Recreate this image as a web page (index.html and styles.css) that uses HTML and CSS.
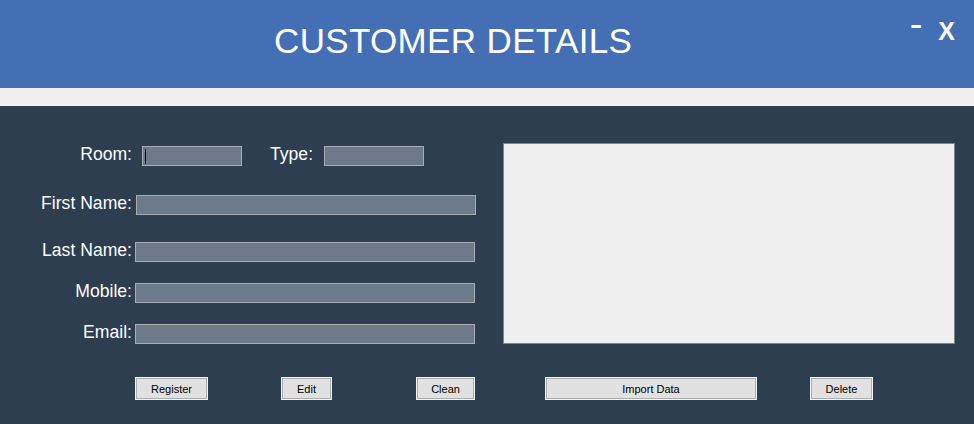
FILE: index.html
```html
<!DOCTYPE html>
<html lang="en">
<head>
<meta charset="utf-8">
<title>Customer Details</title>
<link rel="stylesheet" href="styles.css">
</head>
<body>
<header class="titlebar">
  <h1 class="title">CUSTOMER DETAILS</h1>
  <div class="controls">
    <span class="ctl ctl-min">-</span><span class="ctl ctl-close">X</span>
  </div>
</header>
<div class="band"></div>
<main class="content">
  <div class="top">
    <div class="fields">
      <div class="row row-room">
        <span class="label">Room:</span>
        <div class="field field-small field-room"><span class="caret"></span></div>
        <span class="label-inline">Type:</span>
        <div class="field field-small field-type"></div>
      </div>
      <div class="row row-first">
        <span class="label">First Name:</span>
        <div class="field field-wide field-first"></div>
      </div>
      <div class="row row-last">
        <span class="label">Last Name:</span>
        <div class="field field-wide"></div>
      </div>
      <div class="row row-mobile">
        <span class="label">Mobile:</span>
        <div class="field field-wide"></div>
      </div>
      <div class="row row-email">
        <span class="label">Email:</span>
        <div class="field field-wide"></div>
      </div>
    </div>
    <div class="panel"></div>
  </div>
  <div class="actions">
    <button class="btn btn-register">Register</button>
    <button class="btn btn-edit">Edit</button>
    <button class="btn btn-clean">Clean</button>
    <button class="btn btn-import">Import Data</button>
    <button class="btn btn-delete">Delete</button>
  </div>
</main>
</body>
</html>
```
FILE: styles.css
```css
html, body {
  margin: 0;
  padding: 0;
}
body {
  width: 974px;
  height: 424px;
  overflow: hidden;
  background: #2c3e50;
  font-family: "Liberation Sans", Arial, sans-serif;
}
.titlebar {
  height: 88px;
  background: #456fb4;
  display: flex;
  align-items: flex-start;
}
.title {
  margin: 23px 0 0 274px;
  font-size: 35px;
  line-height: 35px;
  letter-spacing: 0.35px;
  font-weight: normal;
  color: #ffffff;
}
.controls {
  margin-left: auto;
  margin-right: 19px;
  margin-top: 9px;
  line-height: 30px;
  white-space: nowrap;
  color: #ffffff;
}
.ctl-min {
  font-size: 38px;
  margin-right: 16px;
  vertical-align: 3px;
}
.ctl-close {
  font-size: 25px;
  font-weight: bold;
}
.band {
  height: 18px;
  background: #f0f0f0;
}
.content {
  height: 318px;
  background: #2c3e50;
}
.top {
  display: flex;
  align-items: flex-start;
  padding-top: 37px;
}
.fields {
  width: 476px;
  padding-top: 3px;
}
.row {
  display: flex;
  align-items: flex-start;
  height: 20px;
}
.row-first { margin-top: 29px; }
.row-last { margin-top: 27px; }
.row-mobile { margin-top: 21px; }
.row-email { margin-top: 21px; }
.label, .label-inline {
  font-size: 17.6px;
  line-height: 16px;
  color: #ffffff;
  white-space: nowrap;
}
.label {
  width: 132px;
  text-align: right;
}
.label-inline {
  margin-left: 28px;
}
.field {
  box-sizing: border-box;
  height: 20px;
  background: #6d7a89;
  border: 1px solid #a8adb4;
  position: relative;
}
.field-small { width: 100px; }
.field-room { margin-left: 10px; }
.field-type { margin-left: 11px; }
.field-wide {
  width: 340px;
  margin-left: 3px;
}
.field-first { margin-left: 4px; }
.caret {
  position: absolute;
  left: 2px;
  top: 2px;
  width: 1px;
  height: 15px;
  background: #000000;
}
.panel {
  box-sizing: border-box;
  width: 452px;
  height: 201px;
  margin-left: auto;
  margin-right: 19px;
  background: #f0f0f0;
  border: 1px solid #7a8694;
}
.actions {
  display: flex;
  margin-top: 33px;
  padding-left: 135px;
}
.btn {
  box-sizing: border-box;
  height: 23px;
  padding: 0;
  background: #e1e1e1;
  border: 1px solid #f4f4f4;
  box-shadow: inset 0 0 0 1px #adadad;
  font-family: "Liberation Sans", Arial, sans-serif;
  font-size: 11px;
  color: #000000;
}
.btn-register { width: 73px; }
.btn-edit { width: 51px; margin-left: 73px; }
.btn-clean { width: 59px; margin-left: 84px; }
.btn-import { width: 212px; margin-left: 70px; }
.btn-delete { width: 63px; margin-left: 53px; }
```
